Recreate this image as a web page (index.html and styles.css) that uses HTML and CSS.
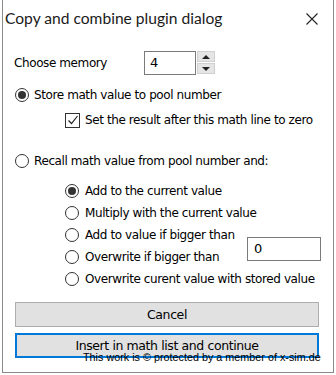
FILE: index.html
```html
<!DOCTYPE html>
<html lang="en">
<head>
    <meta charset="UTF-8">
    <title>Copy and combine plugin dialog</title>
    <link rel="stylesheet" href="styles.css">
</head>
<body>

    <div class="window">
        <div class="titlebar">
            <span class="title">Copy and combine plugin dialog</span>
            <svg class="close" width="12" height="12" viewBox="0 0 12 12">
                <path d="M0.5 0.5 L11.5 11.5 M11.5 0.5 L0.5 11.5" stroke="#222" stroke-width="1.1" fill="none"/>
            </svg>
        </div>

        <div class="content">
            <!-- Memory selection -->
            <div class="memory-row">
                <span class="label">Choose memory</span>
                <div class="spin">
                    <div class="spin-value">4</div>
                    <div class="spin-buttons">
                        <div class="spin-btn"><span class="arrow up"></span></div>
                        <div class="spin-btn"><span class="arrow down"></span></div>
                    </div>
                </div>
            </div>

            <div class="option store">
                <span class="radio checked"></span>
                <span>Store math value to pool number</span>
            </div>

            <div class="option check-row">
                <span class="checkbox">
                    <svg width="12" height="12" viewBox="0 0 12 12">
                        <path d="M1.5 6.5 L4.5 9.5 L10.5 2" stroke="#222" stroke-width="1.2" fill="none"/>
                    </svg>
                </span>
                <span>Set the result after this math line to zero</span>
            </div>

            <div class="option recall">
                <span class="radio"></span>
                <span>Recall math value from pool number and:</span>
            </div>

            <div class="sub-options">
                <div class="option"><span class="radio checked"></span><span>Add to the current value</span></div>
                <div class="option"><span class="radio"></span><span>Multiply with the current value</span></div>
                <div class="option"><span class="radio"></span><span>Add to value if bigger than</span></div>
                <div class="option"><span class="radio"></span><span>Overwrite if bigger than</span></div>
                <div class="option wide"><span class="radio"></span><span>Overwrite curent value with stored value</span></div>
                <div class="limit">0</div>
            </div>

            <div class="buttons">
                <div class="button">Cancel</div>
                <div class="button default">Insert in math list and continue</div>
            </div>
        </div>

        <div class="watermark">This work is &copy; protected by a member of x-sim.de</div>
    </div>

</body>
</html>
```

FILE: styles.css
```css
body {
    margin: 0;
    background: #fff;
    font-family: Tahoma, "DejaVu Sans", sans-serif;
    font-size: 12px;
    letter-spacing: -0.4px;
    color: #000;
}

.window {
    position: relative;
    margin-left: 2px;
    width: 330px;
    height: 372px;
    background: #fff;
    border-left: 1px solid #8a8a8a;
    border-right: 1px solid #8a8a8a;
    border-bottom: 1px solid #8a8a8a;
    overflow: hidden;
}

.titlebar {
    display: flex;
    justify-content: space-between;
    align-items: center;
    height: 36px;
    padding: 0 15px 0 2px;
}

.title {
    font-family: Lato, sans-serif;
    font-size: 15.6px;
    letter-spacing: 0;
    color: #1a1a1a;
    margin-top: -1px;
}

.close {
    margin-top: 1px;
}

.content {
    padding: 15px 0 0 11px;
}

.memory-row {
    display: flex;
    align-items: center;
    height: 24px;
}

.label {
    width: 130px;
}

.spin {
    display: flex;
    height: 24px;
}

.spin-value {
    width: 45px;
    border: 1px solid #7a7a7a;
    padding-left: 5px;
    line-height: 22px;
    font-size: 13px;
}

.spin-buttons {
    display: flex;
    flex-direction: column;
    gap: 1px;
    margin-left: 1px;
}

.spin-btn {
    width: 18px;
    height: 11px;
    background: #e5e5e5;
    border: 1px solid #d0d0d0;
    box-sizing: border-box;
    display: flex;
    justify-content: center;
    align-items: center;
}

.arrow {
    width: 0;
    height: 0;
    border-left: 4px solid transparent;
    border-right: 4px solid transparent;
}

.arrow.up {
    border-bottom: 4px solid #222;
}

.arrow.down {
    border-top: 4px solid #222;
}

.option {
    display: flex;
    align-items: center;
    gap: 5px;
    height: 22px;
    white-space: nowrap;
}

.radio {
    width: 14px;
    height: 14px;
    border: 1px solid #333;
    border-radius: 50%;
    box-sizing: border-box;
    display: flex;
    justify-content: center;
    align-items: center;
    flex-shrink: 0;
}

.radio.checked::after {
    content: "";
    width: 8px;
    height: 8px;
    border-radius: 50%;
    background: #333;
}

.store {
    margin-top: 9px;
    margin-left: 1px;
}

.check-row {
    margin-top: 3px;
    margin-left: 51px;
}

.checkbox {
    width: 15px;
    height: 15px;
    border: 1px solid #333;
    box-sizing: border-box;
    display: flex;
    justify-content: center;
    align-items: center;
    flex-shrink: 0;
}

.recall {
    margin-top: 19px;
    margin-left: 1px;
}

.sub-options {
    display: grid;
    grid-template-columns: 182px 74px;
    grid-auto-rows: 22px;
    margin-top: 8px;
    margin-left: 51px;
}

.sub-options .option {
    grid-column: 1;
    gap: 6px;
}

.sub-options .option.wide {
    grid-column: 1 / 3;
}

.limit {
    grid-column: 2;
    grid-row: 3 / 5;
    align-self: start;
    margin-top: 13px;
    height: 24px;
    box-sizing: border-box;
    border: 1px solid #7a7a7a;
    padding-left: 6px;
    line-height: 22px;
    font-size: 13px;
}

.buttons {
    display: flex;
    flex-direction: column;
    gap: 6px;
    margin-top: 12px;
    margin-left: 1px;
    width: 304px;
}

.button {
    height: 25px;
    background: #e1e1e1;
    border: 1px solid #adadad;
    box-sizing: border-box;
    text-align: center;
    line-height: 23px;
    font-size: 12.5px;
}

.button.default {
    border: 2px solid #0078d7;
    line-height: 21px;
}

.watermark {
    position: absolute;
    left: 80px;
    top: 351px;
    font-family: "Liberation Sans", Arial, sans-serif;
    font-size: 10.8px;
    letter-spacing: 0;
    white-space: nowrap;
    color: #000;
}
```
